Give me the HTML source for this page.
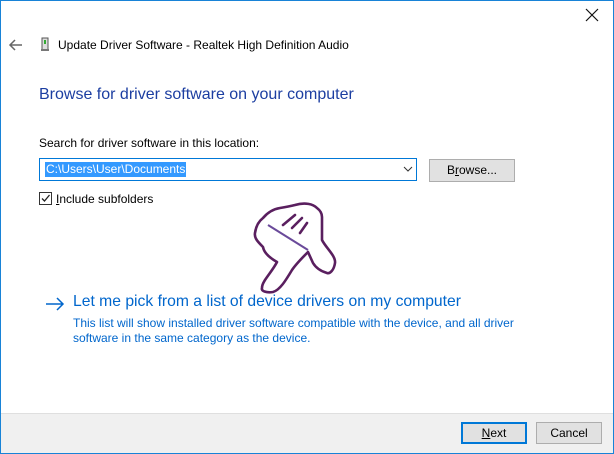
<!DOCTYPE html>
<html><head><meta charset="utf-8">
<style>
*{margin:0;padding:0;box-sizing:border-box}
body{width:614px;height:454px;background:#fff;font-family:"Liberation Sans",sans-serif;position:relative;overflow:hidden;font-size:12px;color:#000}
.win{position:absolute;left:0;top:0;width:614px;height:454px;border:1px solid #1883d7}
.abs{position:absolute;white-space:nowrap}
.btn{position:absolute;background:#e1e1e1;border:1px solid #adadad;text-align:center;font-size:12px;line-height:21px}
.footer{position:absolute;left:1px;right:1px;top:413px;bottom:1px;background:#f0f0f0;border-top:1px solid #dfdfdf}
</style></head><body>
<div class="win"></div>
<svg class="abs" style="left:585px;top:8px" width="14" height="14"><path d="M1 1L13 13M13 1L1 13" stroke="#111" stroke-width="1.2"/></svg>
<svg class="abs" style="left:8px;top:38px" width="16" height="14"><path d="M14 7H2M7 2L2 7L7 12" stroke="#666" stroke-width="1.5" fill="none"/></svg>
<svg class="abs" style="left:40px;top:37px" width="10" height="15"><rect x="2" y="1" width="6" height="12" fill="#ddd" stroke="#555"/><rect x="4" y="3" width="2" height="4" fill="#3a3"/><rect x="1" y="12" width="8" height="2" fill="#777"/></svg>
<div class="abs" style="left:58px;top:38px;font-size:12px;color:#000">Update Driver Software - Realtek High Definition Audio</div>
<div class="abs" style="left:39px;top:86px;font-size:16px;color:#1c3ea1">Browse for driver software on your computer</div>
<div class="abs" style="left:39px;top:136px">Search for driver software in this location:</div>
<div class="abs" style="left:39px;top:158px;width:378px;height:23px;border:1px solid #0078d7;background:#fff"></div>
<div class="abs" style="left:45px;top:162px;background:#3399ff;color:#fff;line-height:15px;padding:0 1px">C:\Users\User\Documents</div>
<svg class="abs" style="left:403px;top:166px" width="10" height="6"><path d="M1 1L5 5L9 1" stroke="#333" fill="none"/></svg>
<div class="btn" style="left:429px;top:159px;width:86px;height:23px">B<u>r</u>owse...</div>
<div class="abs" style="left:39px;top:192px;width:13px;height:13px;border:1px solid #333;background:#fff"></div>
<svg class="abs" style="left:40px;top:193px" width="11" height="11"><path d="M2 5.5L4.5 8L9.5 2" stroke="#222" stroke-width="1.3" fill="none"/></svg>
<div class="abs" style="left:56px;top:192px"><u>I</u>nclude subfolders</div>
<svg class="abs" style="left:250px;top:198px" width="90" height="100" viewBox="0 0 90 100">
<path d="M45 7C55 4 63 6 67 10C71 13 72 16 72 19L72 42C76 50 86 58 85 65C84 72 80 76 77 75C70 73 66 70 63 65L58 54C52 60 46 66 42 72C36 82 30 92 23 94C16 95 11 93 12 90C12 86 14 84 15 82C19 76 24 70 27 64C20 60 14 55 13 49C8 44 4 40 5 35C6 28 9 23 13 20C18 14 24 11 30 10C36 9 41 8 45 7Z" fill="none" stroke="#5a1f5f" stroke-width="2.6" stroke-linejoin="round"/>
<path d="M18 27L58 52" stroke="#6a4a9a" stroke-width="2"/>
<path d="M33 27L45 17M42 30L52 20M50 35L57 25" stroke="#5a1f5f" stroke-width="2.6" stroke-linecap="round"/>
</svg>
<svg class="abs" style="left:45px;top:297px" width="20" height="14"><path d="M1 7H18M12 1L18 7L12 13" stroke="#0066cc" stroke-width="1.5" fill="none"/></svg>
<div class="abs" style="left:73px;top:293px;font-size:15.7px;color:#0066cc">Let me pick from a list of device drivers on my computer</div>
<div class="abs" style="left:73px;top:316px;color:#0066cc;line-height:15px">This list will show installed driver software compatible with the device, and all driver<br>software in the same category as the device.</div>
<div class="footer"></div>
<div class="btn" style="left:461px;top:422px;width:66px;height:22px;border:2px solid #0078d7;line-height:18px"><u>N</u>ext</div>
<div class="btn" style="left:536px;top:422px;width:66px;height:22px;line-height:20px">Cancel</div>
</body></html>
